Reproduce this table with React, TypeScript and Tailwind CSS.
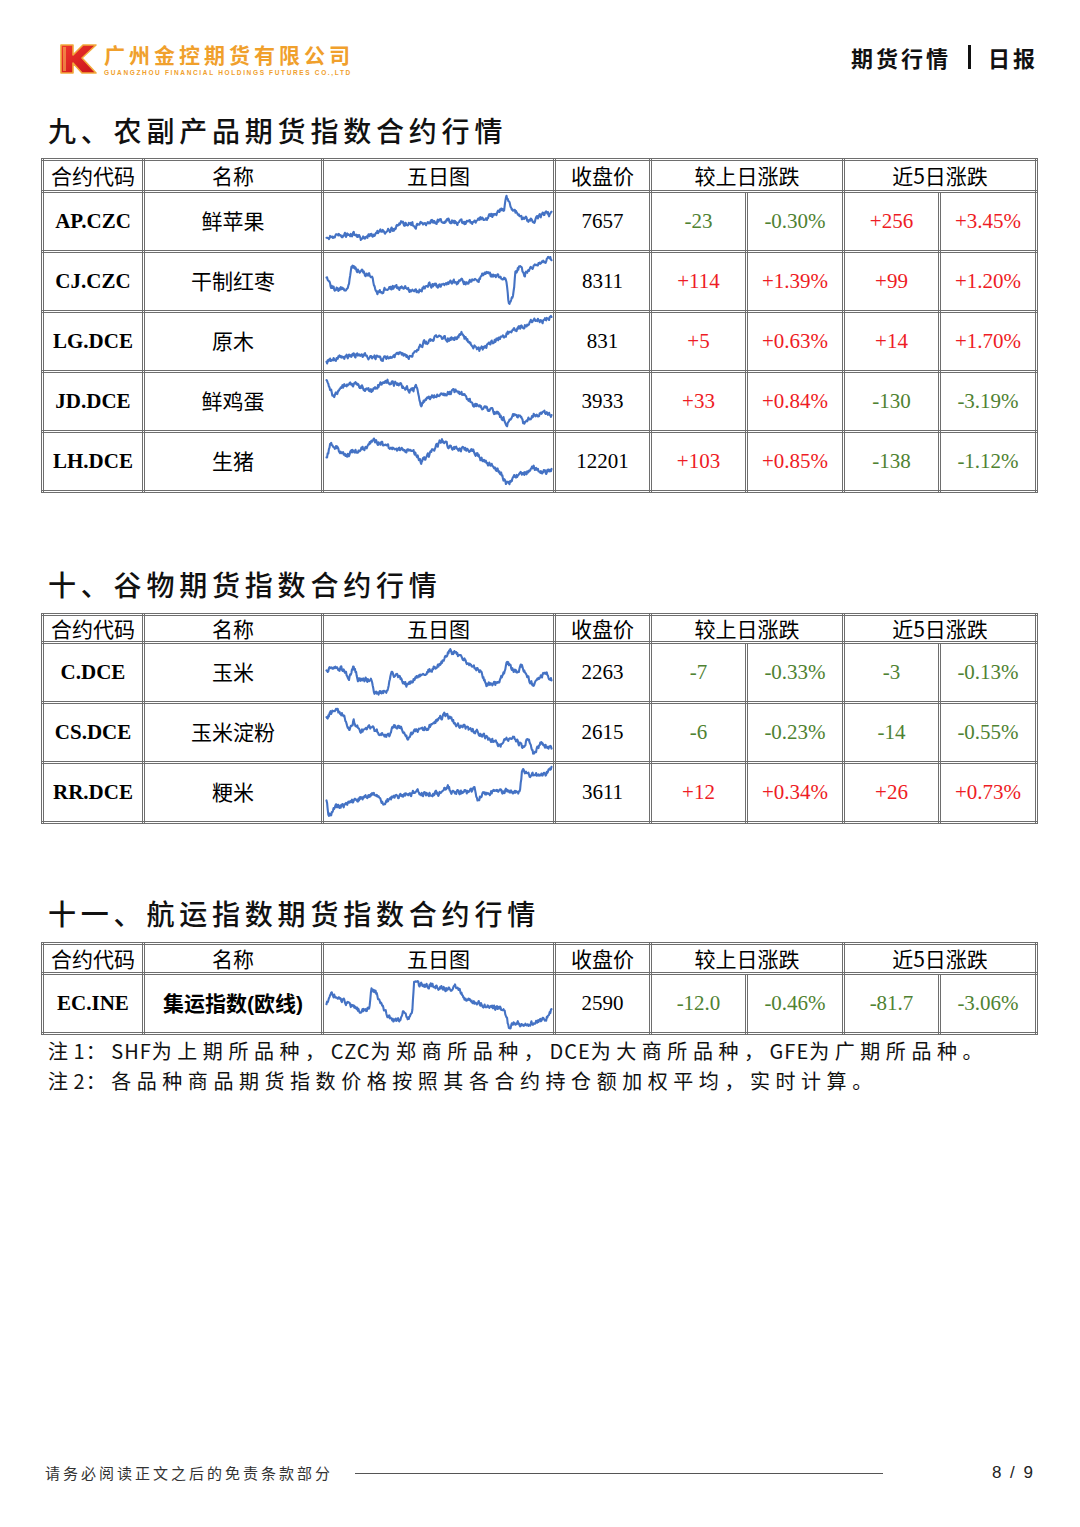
import React from 'react';

type Pt = [number, number];

type Row = {
  code: string;
  name: string;
  close: string;
  d1: string;
  p1: string;
  d5: string;
  p5: string;
  seed: number;
  line: Pt[];
  boldName?: boolean;
};

function mulberry32(a: number) {
  return function () {
    a |= 0;
    a = (a + 0x6d2b79f5) | 0;
    let t = Math.imul(a ^ (a >>> 15), 1 | a);
    t = (t + Math.imul(t ^ (t >>> 7), 61 | t)) ^ t;
    return ((t ^ (t >>> 14)) >>> 0) / 4294967296;
  };
}

function sparkPath(anchors: Pt[], seed: number, w: number, h: number) {
  const rnd = mulberry32(seed);
  const n = 380;
  const pts: string[] = [];
  let jit = 0;
  let k = 0;
  for (let i = 0; i <= n; i++) {
    const x = i / n;
    while (k < anchors.length - 2 && x > anchors[k + 1][0]) k++;
    const [x0, y0] = anchors[k];
    const [x1, y1] = anchors[k + 1];
    const t = x1 === x0 ? 0 : Math.min(1, Math.max(0, (x - x0) / (x1 - x0)));
    let y = y0 + (y1 - y0) * t;
    jit = jit * 0.5 + (rnd() - 0.5) * 0.075;
    y = Math.min(0.97, Math.max(0.03, y + jit));
    pts.push(`${(1.5 + x * (w - 3)).toFixed(1)},${(y * h).toFixed(1)}`);
  }
  return 'M' + pts.join('L');
}

function Spark({ line, seed }: { line: Pt[]; seed: number }) {
  const w = 228;
  const h = 56;
  return (
    <svg width={w} height={h} viewBox={`0 0 ${w} ${h}`} className="block mx-auto">
      <path
        d={sparkPath(line, seed, w, h)}
        fill="none"
        stroke="#4472c4"
        strokeWidth={2.1}
        strokeLinejoin="round"
        strokeLinecap="round"
      />
    </svg>
  );
}

const agri: Row[] = [
  {
    code: 'AP.CZC', name: '鲜苹果', close: '7657', d1: '-23', p1: '-0.30%', d5: '+256', p5: '+3.45%', seed: 11,
    line: [[0, 0.78], [0.06, 0.74], [0.12, 0.72], [0.16, 0.8], [0.22, 0.7], [0.3, 0.62], [0.33, 0.52], [0.4, 0.56], [0.48, 0.5], [0.55, 0.48], [0.62, 0.52], [0.7, 0.45], [0.76, 0.32], [0.79, 0.26], [0.8, 0.06], [0.82, 0.22], [0.87, 0.45], [0.92, 0.48], [0.96, 0.38], [1, 0.36]],
  },
  {
    code: 'CJ.CZC', name: '干制红枣', close: '8311', d1: '+114', p1: '+1.39%', d5: '+99', p5: '+1.20%', seed: 23,
    line: [[0, 0.45], [0.03, 0.62], [0.08, 0.62], [0.1, 0.55], [0.11, 0.18], [0.14, 0.3], [0.18, 0.38], [0.2, 0.38], [0.22, 0.7], [0.28, 0.6], [0.35, 0.62], [0.4, 0.68], [0.45, 0.55], [0.5, 0.58], [0.55, 0.5], [0.62, 0.5], [0.68, 0.45], [0.7, 0.35], [0.78, 0.42], [0.8, 0.5], [0.81, 0.92], [0.83, 0.75], [0.84, 0.32], [0.86, 0.22], [0.88, 0.35], [0.91, 0.25], [0.95, 0.15], [1, 0.08]],
  },
  {
    code: 'LG.DCE', name: '原木', close: '831', d1: '+5', p1: '+0.63%', d5: '+14', p5: '+1.70%', seed: 37,
    line: [[0, 0.85], [0.04, 0.78], [0.08, 0.76], [0.15, 0.72], [0.2, 0.78], [0.25, 0.8], [0.3, 0.76], [0.33, 0.72], [0.36, 0.78], [0.4, 0.65], [0.43, 0.52], [0.47, 0.45], [0.5, 0.36], [0.52, 0.45], [0.58, 0.42], [0.6, 0.36], [0.64, 0.55], [0.68, 0.65], [0.73, 0.52], [0.78, 0.42], [0.83, 0.28], [0.88, 0.2], [0.93, 0.08], [0.96, 0.12], [1, 0.06]],
  },
  {
    code: 'JD.DCE', name: '鲜鸡蛋', close: '3933', d1: '+33', p1: '+0.84%', d5: '-130', p5: '-3.19%', seed: 41,
    line: [[0, 0.08], [0.03, 0.4], [0.07, 0.25], [0.1, 0.18], [0.15, 0.22], [0.2, 0.3], [0.24, 0.18], [0.27, 0.14], [0.32, 0.18], [0.37, 0.28], [0.4, 0.25], [0.42, 0.55], [0.46, 0.42], [0.52, 0.35], [0.58, 0.3], [0.61, 0.38], [0.66, 0.55], [0.7, 0.6], [0.76, 0.72], [0.79, 0.8], [0.8, 0.92], [0.83, 0.72], [0.86, 0.75], [0.88, 0.9], [0.92, 0.72], [0.96, 0.7], [1, 0.72]],
  },
  {
    code: 'LH.DCE', name: '生猪', close: '12201', d1: '+103', p1: '+0.85%', d5: '-138', p5: '-1.12%', seed: 53,
    line: [[0, 0.45], [0.02, 0.15], [0.05, 0.25], [0.08, 0.4], [0.12, 0.3], [0.18, 0.25], [0.21, 0.1], [0.26, 0.22], [0.3, 0.28], [0.36, 0.3], [0.4, 0.35], [0.42, 0.5], [0.46, 0.35], [0.51, 0.12], [0.55, 0.25], [0.62, 0.28], [0.67, 0.35], [0.7, 0.5], [0.75, 0.6], [0.78, 0.72], [0.8, 0.9], [0.84, 0.75], [0.88, 0.7], [0.92, 0.58], [0.95, 0.68], [1, 0.65]],
  },
];

const grain: Row[] = [
  {
    code: 'C.DCE', name: '玉米', close: '2263', d1: '-7', p1: '-0.33%', d5: '-3', p5: '-0.13%', seed: 61,
    line: [[0, 0.45], [0.04, 0.38], [0.08, 0.45], [0.1, 0.62], [0.12, 0.38], [0.14, 0.6], [0.2, 0.62], [0.21, 0.85], [0.27, 0.85], [0.29, 0.5], [0.33, 0.6], [0.36, 0.72], [0.4, 0.55], [0.44, 0.5], [0.5, 0.35], [0.53, 0.22], [0.55, 0.1], [0.6, 0.22], [0.65, 0.38], [0.68, 0.45], [0.71, 0.7], [0.76, 0.68], [0.79, 0.5], [0.8, 0.3], [0.84, 0.48], [0.87, 0.38], [0.9, 0.62], [0.92, 0.72], [0.95, 0.55], [0.98, 0.5], [1, 0.62]],
  },
  {
    code: 'CS.DCE', name: '玉米淀粉', close: '2615', d1: '-6', p1: '-0.23%', d5: '-14', p5: '-0.55%', seed: 73,
    line: [[0, 0.2], [0.04, 0.1], [0.08, 0.18], [0.1, 0.45], [0.12, 0.28], [0.15, 0.48], [0.2, 0.4], [0.23, 0.5], [0.28, 0.52], [0.3, 0.35], [0.34, 0.45], [0.36, 0.58], [0.4, 0.45], [0.45, 0.4], [0.5, 0.25], [0.53, 0.18], [0.58, 0.35], [0.63, 0.42], [0.68, 0.5], [0.72, 0.6], [0.78, 0.72], [0.8, 0.58], [0.84, 0.6], [0.87, 0.75], [0.9, 0.58], [0.92, 0.88], [0.95, 0.7], [1, 0.75]],
  },
  {
    code: 'RR.DCE', name: '粳米', close: '3611', d1: '+12', p1: '+0.34%', d5: '+26', p5: '+0.73%', seed: 89,
    line: [[0, 0.6], [0.01, 0.92], [0.04, 0.74], [0.1, 0.7], [0.15, 0.6], [0.2, 0.52], [0.23, 0.56], [0.25, 0.68], [0.3, 0.58], [0.38, 0.52], [0.4, 0.46], [0.42, 0.52], [0.5, 0.5], [0.54, 0.4], [0.56, 0.5], [0.62, 0.48], [0.66, 0.45], [0.67, 0.62], [0.7, 0.5], [0.8, 0.46], [0.86, 0.48], [0.87, 0.06], [0.9, 0.18], [0.97, 0.18], [1, 0.06]],
  },
];

const shipping: Row[] = [
  {
    code: 'EC.INE', name: '集运指数(欧线)', close: '2590', d1: '-12.0', p1: '-0.46%', d5: '-81.7', p5: '-3.06%', seed: 97, boldName: true,
    line: [[0, 0.5], [0.02, 0.32], [0.05, 0.38], [0.12, 0.55], [0.15, 0.62], [0.19, 0.58], [0.2, 0.2], [0.22, 0.3], [0.24, 0.5], [0.27, 0.68], [0.3, 0.8], [0.33, 0.8], [0.34, 0.62], [0.36, 0.76], [0.38, 0.68], [0.39, 0.1], [0.41, 0.16], [0.46, 0.16], [0.5, 0.2], [0.55, 0.24], [0.58, 0.18], [0.6, 0.3], [0.62, 0.45], [0.67, 0.48], [0.73, 0.55], [0.79, 0.6], [0.81, 0.9], [0.83, 0.85], [0.89, 0.86], [0.95, 0.8], [0.98, 0.74], [1, 0.6]],
  },
];

const cjk = "font-['Noto_Sans_CJK_SC',sans-serif]";
const serif = "font-['Liberation_Serif','Noto_Sans_CJK_SC',serif]";
const cell = 'border-[3px] border-double border-[#6e6e6e] p-0 text-center align-middle';

function tone(v: string) {
  return v.startsWith('+') ? 'text-[#ee1c25]' : 'text-[#4f8232]';
}

function QuoteTable({ rows, headH }: { rows: Row[]; headH: string }) {
  return (
    <table className="table-fixed border-collapse w-[994px] ml-[41px]">
      <colgroup>
        <col className="w-[101px]" />
        <col className="w-[179px]" />
        <col className="w-[232px]" />
        <col className="w-[96px]" />
        <col className="w-[96px]" />
        <col className="w-[97px]" />
        <col className="w-[96px]" />
        <col className="w-[97px]" />
      </colgroup>
      <thead>
        <tr className={`${cjk} text-[21px] text-black`}>
          <th className={`${cell} ${headH} font-normal leading-none`}>合约代码</th>
          <th className={`${cell} font-normal leading-none`}>名称</th>
          <th className={`${cell} font-normal leading-none`}>五日图</th>
          <th className={`${cell} font-normal leading-none`}>收盘价</th>
          <th colSpan={2} className={`${cell} font-normal leading-none`}>较上日涨跌</th>
          <th colSpan={2} className={`${cell} font-normal leading-none`}>近5日涨跌</th>
        </tr>
      </thead>
      <tbody>
        {rows.map((r) => (
          <tr key={r.code} className="text-[21px]">
            <td className={`${cell} h-[60px] ${serif} font-bold text-black`}>{r.code}</td>
            <td className={`${cell} font-['Liberation_Sans','Noto_Sans_CJK_SC',sans-serif] text-black ${r.boldName ? 'font-bold' : 'font-normal'}`}>
              {r.name}
            </td>
            <td className={cell}>
              <Spark line={r.line} seed={r.seed} />
            </td>
            <td className={`${cell} ${serif} text-black`}>{r.close}</td>
            <td className={`${cell} ${serif} ${tone(r.d1)}`}>{r.d1}</td>
            <td className={`${cell} ${serif} ${tone(r.p1)}`}>{r.p1}</td>
            <td className={`${cell} ${serif} ${tone(r.d5)}`}>{r.d5}</td>
            <td className={`${cell} ${serif} ${tone(r.p5)}`}>{r.p5}</td>
          </tr>
        ))}
      </tbody>
    </table>
  );
}

function Logo() {
  return (
    <div className="flex items-start gap-[7px]">
      <svg width="37" height="30" viewBox="0 0 37 30" className="block">
        <defs>
          <linearGradient id="kRed" x1="0" y1="0" x2="1" y2="1">
            <stop offset="0" stopColor="#f0362c" />
            <stop offset="1" stopColor="#c8141b" />
          </linearGradient>
        </defs>
        <polygon
          points="1,1 13,1 13,11 23,1 36,1 22,14 36,29 22,29 13,19 13,29 1,29"
          fill="url(#kRed)"
          stroke="#f2a93b"
          strokeWidth="1.6"
          strokeLinejoin="round"
        />
        <polygon points="3,3 6,3 6,27 3,27" fill="#f7c35a" opacity="0.55" />
      </svg>
      <div className="flex flex-col">
        <div className={`${cjk} text-[21px] leading-[21px] font-bold tracking-[4px] text-[#f0a02c]`}>
          广州金控期货有限公司
        </div>
        <div className="font-['Liberation_Sans',sans-serif] text-[6.5px] leading-[8px] mt-[4px] font-bold tracking-[1.65px] text-[#f0a02c] whitespace-nowrap">
          GUANGZHOU FINANCIAL HOLDINGS FUTURES CO.,LTD
        </div>
      </div>
    </div>
  );
}

function SectionTitle({ children, mt }: { children: React.ReactNode; mt: string }) {
  return (
    <h2 className={`${cjk} ${mt} ml-[48px] text-[28px] leading-[36px] font-medium tracking-[4.8px] text-[#111]`}>
      {children}
    </h2>
  );
}

function Lat({ children }: { children: React.ReactNode }) {
  return <span className="tracking-[1px]">{children}</span>;
}

export default function App() {
  return (
    <div className="w-[1080px] h-[1527px] bg-white flex flex-col overflow-hidden">
      <header className="flex items-start justify-between pl-[60px] pr-[45px] pt-[44px]">
        <Logo />
        <div className={`${cjk} flex items-center text-[22px] leading-[30px] font-bold text-[#111] -mt-[2px] -mr-[3px]`}>
          <span className="tracking-[3px] -ml-[6px]">期货行情</span>
          <span className="mx-[17px] w-[3px] h-[24px] bg-[#111]" />
          <span className="tracking-[3px]">日报</span>
        </div>
      </header>

      <SectionTitle mt="mt-[35px]">九、农副产品期货指数合约行情</SectionTitle>
      <div className="mt-[10px]">
        <QuoteTable rows={agri} headH="h-[32px]" />
      </div>

      <SectionTitle mt="mt-[73px]">十、谷物期货指数合约行情</SectionTitle>
      <div className="mt-[11px]">
        <QuoteTable rows={grain} headH="h-[28px]" />
      </div>

      <SectionTitle mt="mt-[71px]">十一、航运指数期货指数合约行情</SectionTitle>
      <div className="mt-[11px]">
        <QuoteTable rows={shipping} headH="h-[30px]" />
      </div>

      <div className={`${cjk} mt-[1px] ml-[48px] text-[20px] leading-[30px] tracking-[5.55px] text-[#111]`}>
        <p>
          注<Lat>1</Lat>：<Lat>SHF</Lat>为上期所品种，<Lat>CZC</Lat>为郑商所品种，<Lat>DCE</Lat>为大商所品种，<Lat>GFE</Lat>为广期所品种。
        </p>
        <p>
          注<Lat>2</Lat>：各品种商品期货指数价格按照其各合约持仓额加权平均，实时计算。
        </p>
      </div>

      <footer className="mt-auto mb-[42px] flex items-center pl-[45px] pr-[45px] h-[24px]">
        <span className={`${cjk} text-[15px] tracking-[3px] text-[#333]`}>请务必阅读正文之后的免责条款部分</span>
        <span className="ml-[22px] w-[528px] h-px bg-[#555]" />
        <span className="ml-auto font-['Liberation_Sans',sans-serif] text-[17px] text-[#222] tracking-[2px]">8 / 9</span>
      </footer>
    </div>
  );
}
